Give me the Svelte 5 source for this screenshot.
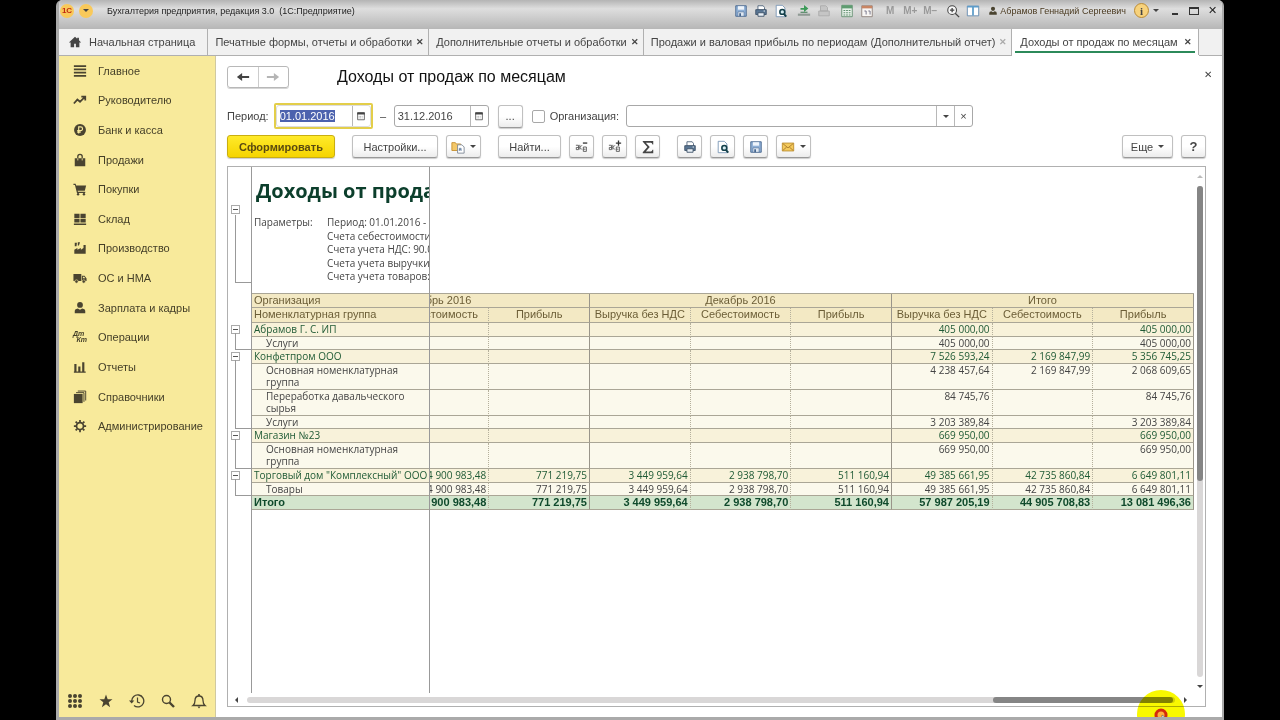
<script>
  // --- Tabs ---
  const tabs = [
    { label: 'Печатные формы, отчеты и обработки' },
    { label: 'Дополнительные отчеты и обработки' },
    { label: 'Продажи и валовая прибыль по периодам (Дополнительный отчет)', dim: true },
    { label: 'Доходы от продаж по месяцам', active: true },
  ];

  // --- Title bar tools ---
  const tools = [
    ['save', 'print', 'preview'],
    ['link', 'doc'],
    ['calc', 'calendar'],
    ['M', 'M+', 'M−'],
    ['zoom', 'panels'],
  ];

  // --- Sections ---
  const sections = [
    { icon: 'menu', label: 'Главное' },
    { icon: 'trend', label: 'Руководителю' },
    { icon: 'ruble', label: 'Банк и касса' },
    { icon: 'bag', label: 'Продажи' },
    { icon: 'cart', label: 'Покупки' },
    { icon: 'store', label: 'Склад' },
    { icon: 'factory', label: 'Производство' },
    { icon: 'truck', label: 'ОС и НМА' },
    { icon: 'person', label: 'Зарплата и кадры' },
    { icon: 'dtkt', label: 'Операции' },
    { icon: 'chart', label: 'Отчеты' },
    { icon: 'books', label: 'Справочники' },
    { icon: 'gear', label: 'Администрирование' },
  ];
  const shortcuts = ['grid', 'star', 'history', 'search', 'bell'];

  // --- Report ---
  const params = [
    'Период: 01.01.2016 -',
    'Счета себестоимости:',
    'Счета учета НДС: 90.03',
    'Счета учета выручки:',
    'Счета учета товаров:',
  ];
  const months = ['Ноябрь 2016', 'Декабрь 2016', 'Итого'];
  const measures = [
    '', 'Себестоимость', 'Прибыль',
    'Выручка без НДС', 'Себестоимость', 'Прибыль',
    'Выручка без НДС', 'Себестоимость', 'Прибыль',
  ];

  const empty = ['', '', '', '', '', ''];
  const trade = ['', '4 900 983,48', '771 219,75', '3 449 959,64', '2 938 798,70', '511 160,94', '49 385 661,95', '42 735 860,84', '6 649 801,11'];
  const groups = [
    {
      name: 'Абрамов Г. С. ИП',
      values: [...empty, '405 000,00', '', '405 000,00'],
      items: [{ name: 'Услуги', values: [...empty, '405 000,00', '', '405 000,00'] }],
    },
    {
      name: 'Конфетпром ООО',
      values: [...empty, '7 526 593,24', '2 169 847,99', '5 356 745,25'],
      items: [
        { name: 'Основная номенклатурная группа', tall: true, values: [...empty, '4 238 457,64', '2 169 847,99', '2 068 609,65'] },
        { name: 'Переработка давальческого сырья', tall: true, values: [...empty, '84 745,76', '', '84 745,76'] },
        { name: 'Услуги', values: [...empty, '3 203 389,84', '', '3 203 389,84'] },
      ],
    },
    {
      name: 'Магазин №23',
      values: [...empty, '669 950,00', '', '669 950,00'],
      items: [{ name: 'Основная номенклатурная группа', tall: true, values: [...empty, '669 950,00', '', '669 950,00'] }],
    },
    {
      name: 'Торговый дом "Комплексный" ООО',
      values: trade,
      items: [{ name: 'Товары', values: trade }],
    },
  ];
  const totals = ['', '4 900 983,48', '771 219,75', '3 449 959,64', '2 938 798,70', '511 160,94', '57 987 205,19', '44 905 708,83', '13 081 496,36'];

  let dateFrom = $state('01.01.2016');
  let dateTo = $state('31.12.2016');
  let organization = $state('');
  let byOrganization = $state(false);
</script>

{#snippet icon(name)}
  <svg class="icon" viewBox="0 0 16 16" aria-hidden="true">
    {#if name === 'home'}
      <path d="M8 2 1 8.500h2V14h4v-4h2v4h4V8.500h2L12.500 6V3h-2v1.300z" fill="#444" />
    {:else if name === 'save'}
      <path d="M2 2h12v12H2z" fill="#8fb0d6" stroke="#45648c" />
      <path d="M4.500 2.500h7v4h-7z" fill="#eef4fb" /><path d="M4.500 9h7v5h-7z" fill="#dfe8f2" stroke="#45648c" stroke-width=".6" />
      <path d="M6 10.500h2V14H6z" fill="#45648c" />
    {:else if name === 'print'}
      <path d="M4.500 2h6l1.500 2v3h-7.500z" fill="#fff" stroke="#4c6178" />
      <path d="M2 6.500h12V12H2z" fill="#5a7795" stroke="#3b5066" /><path d="M4.500 10h7v4h-7z" fill="#e9f0f7" stroke="#3b5066" />
      <path d="M11 8h1.500" stroke="#fff" />
    {:else if name === 'preview'}
      <path d="M2.500 1.500h7l3 3v10h-10z" fill="#fff" stroke="#7693b3" />
      <circle cx="9.500" cy="9" r="2.800" fill="#d6ecf2" stroke="#14404a" stroke-width="1.800" /><path d="m11.500 11.500 2.500 3" stroke="#14404a" stroke-width="2.200" />
    {:else if name === 'link'}
      <path d="M1 11h14v2.500H1z" fill="#8f9a94" /><path d="M4 9.500h8" stroke="#5f8d70" stroke-width="1.500" />
      <path d="M4 4.500h4V1l5 4-5 4V6.500H4z" fill="#3c9a58" />
    {:else if name === 'doc'}
      <path d="M4 2h6l2 2v4H4zM2 8h12v5.500H2z" fill="#c5c5c5" stroke="#aaa" />
    {:else if name === 'calc'}
      <path d="M2 1.500h12v13H2z" fill="#e8f2ea" stroke="#5e8c6c" /><path d="M2 1.500h12V5H2z" fill="#5e9c70" />
      <path d="M4 7.500h8M4 10h8M4 12.500h8" stroke="#5e8c6c" stroke-width="1.200" stroke-dasharray="2 1" />
    {:else if name === 'calendar'}
      <path d="M2 2h12v12.500H2z" fill="#f8f6f4" stroke="#8b7f7a" /><path d="M2 2h12v3H2z" fill="#c98563" />
      <path d="M5 8h2v4M9.500 8h2v4" fill="none" stroke="#6a6a80" />
    {:else if name === 'zoom'}
      <circle cx="7" cy="7" r="5" fill="#f8f8f8" stroke="#444" stroke-width="1.200" /><path d="M4.500 7h5M7 4.500v5M10.500 10.500 15 15" stroke="#444" stroke-width="1.500" />
    {:else if name === 'panels'}
      <path d="M1.500 2.500h13v11h-13z" fill="#fff" stroke="#5d86ad" /><path d="M1.500 3h13M8 3v10" stroke="#5d9cc9" stroke-width="2" />
    {:else if name === 'person'}
      <circle cx="8" cy="4.500" r="3.300" /><path d="M2 14v-3q0-2 3.500-2.500L8 10l2.500-1.500Q14 9 14 11v3z" />
    {:else if name === 'menu'}
      <path d="M1 1.500h14v2H1zM1 5.200h14v2H1zM1 8.900h14v2H1zM1 12.600h14v2H1z" />
    {:else if name === 'trend'}
      <path d="m1 12 4-4.500 3 2.500 5-5M9.500 4H14v4.500" fill="none" stroke="#4a4430" stroke-width="2" />
    {:else if name === 'ruble'}
      <circle cx="8" cy="8" r="6.800" /><path d="M6.500 12V4.500h2.300a2.100 2.100 0 0 1 0 4.200H4.800M4.800 10.500h4" fill="none" stroke="#f8ea9b" stroke-width="1.300" />
    {:else if name === 'bag'}
      <path d="M2 6h12v9H2z" /><path d="M5.500 8V4Q5.500 1.500 8 1.500T10.500 4v4" fill="none" stroke="#4a4430" stroke-width="1.500" />
      <path d="M5.500 6v2.500M10.500 6v2.500" stroke="#f8ea9b" />
    {:else if name === 'cart'}
      <path d="M.500 2H3l.6 2H15l-1.500 6H5.300l.4 1.200H14v1.300H4.500L2.200 3.300H.500z" /><circle cx="5.800" cy="14" r="1.400" /><circle cx="12.500" cy="14" r="1.400" />
    {:else if name === 'store'}
      <path d="M1.500 2h6v5h-6zM8.500 2h6v5h-6zM1.500 8h6v4h-6zM8.500 8h6v4h-6zM1 13h14v1.800H1z" />
    {:else if name === 'factory'}
      <path d="M1.500 14.500V10L5 8v2l4-2v2l3-2V4.500h2.500v10zM2 2h2.500L4 6H2zM5.500 1.500H8L6.800 5H5.500z" />
    {:else if name === 'truck'}
      <path d="M.500 3.500h9v8h-9zM10.200 5.500h3l2.300 3v3h-5.300z" /><circle cx="4" cy="12" r="1.900" stroke="#f8ea9b" stroke-width=".7" /><circle cx="12.300" cy="12" r="1.900" stroke="#f8ea9b" stroke-width=".7" />
      <path d="M11.300 6.500h1.500L14 8.200h-2.700z" fill="#f8ea9b" />
    {:else if name === 'chart'}
      <path d="M1.500 4.500H4V13H1.500zM6 7.500h2.500V13H6zM10.500 2.500H13V13h-2.500zM1 13h13.500v1.500H1z" />
    {:else if name === 'books'}
      <path d="M1 4.500h10V15H1z" /><path d="M3.500 3h9v10.500M5.500 1.200h9V12" fill="none" stroke="#4a4430" stroke-width="1.100" />
    {:else if name === 'gear'}
      <circle cx="8" cy="8" r="4" fill="none" stroke="#4a4430" stroke-width="2" />
      <path d="M8 1v2.500M8 12.500V15M1 8h2.500M12.500 8H15M3 3l1.800 1.800M11.200 11.200 13 13M13 3l-1.800 1.800M4.800 11.200 3 13" stroke="#4a4430" stroke-width="2" />
    {:else if name === 'grid'}
      {#each [3, 8, 13] as x}
        {#each [3, 8, 13] as y}
          <circle cx={x} cy={y} r="2" />
        {/each}
      {/each}
    {:else if name === 'star'}
      <path d="m8 1.500 1.700 4.700 4.800.1-3.800 3 1.400 4.900L8 11.300l-4.100 2.900 1.400-4.900-3.800-3 4.800-.1z" />
    {:else if name === 'history'}
      <path d="M2.800 8.500A6 6 0 1 1 5 12.600" fill="none" stroke="#4a4430" stroke-width="1.300" /><path d="M0 7.500h5.300L2.700 10.500z" /><path d="M8.500 4.500V9l2.500 1" fill="none" stroke="#4a4430" stroke-width="1.200" />
    {:else if name === 'search'}
      <circle cx="6.500" cy="6.500" r="4" fill="none" stroke="#4a4430" stroke-width="1.400" /><path d="m9.500 9.500 4.500 4.500" stroke="#4a4430" stroke-width="2.400" />
    {:else if name === 'bell'}
      <path d="M2 12.500q2-1.500 2-5 0-4.500 4-4.500t4 4.500q0 3.500 2 5z" fill="none" stroke="#4a4430" stroke-width="1.300" /><path d="M6.500 13.500h3L8 15.500zM7.200 1h1.600v2H7.200z" />
    {:else if name === 'back' || name === 'forward'}
      <path
        d="M1 8l6-4.500v3.300h8v2.400H7v3.300z"
        fill={name === 'back' ? '#444' : '#b5b5b5'}
        transform={name === 'back' ? undefined : 'rotate(180 8 8)'}
      />
    {:else if name === 'date'}
      <path d="M3.500 4h9v9h-9z" fill="#fff" stroke="#444" /><path d="M3 3h10v3H3z" fill="#444" /><path d="M5 8.500h6M5 10.500h6" stroke="#888" stroke-dasharray="1 1" />
    {:else if name === 'variants'}
      <path d="M1 3h4l1 1.500h5V12H1z" fill="#f4c869" stroke="#c58e2e" /><path d="M7.500 5.500h5l2.500 2.500v7H7.500z" fill="#fff" stroke="#7b8692" />
      <path d="M9.500 12.500v-3h2v3M9.500 11h2" fill="none" stroke="#45648c" stroke-width=".8" />
    {:else if name === 'collapse' || name === 'expand'}
      <path d="M1 6h3v5H1.500V8.500H4M5.500 5.500V11M5.500 8.500 8 6M5.500 8.500 8 11M13 8H9.500v5H13zM9.500 10.500H12" fill="none" stroke="#555" />
      <path d={name === 'expand' ? 'M9 3.500h6M12 .5v6' : 'M9 3.500h5'} stroke="#333" stroke-width="1.500" />
    {:else if name === 'sum'}
      <path d="M14 5V1H2v1l5.300 6L2 14v1h12v-4h-.9q-.3 2-1.800 2H5.500L10 8 5.500 3h5.800q1.500 0 1.800 2z" fill="#444" />
    {:else if name === 'mail'}
      <path d="M1.500 3.500h13v9h-13z" fill="#f4ca5c" stroke="#bd8d2c" /><path d="m2 4 6 5 6-5M2 12l4.500-4M14 12 9.500 8" fill="none" stroke="#a8792a" />
    {/if}
  </svg>
{/snippet}

<div class="desktop">
  <div class="window">
    <header class="titlebar">
      <span class="logo">1С</span>
      <button class="logo drop" aria-label="Главное меню"><i class="caret"></i></button>
      <span class="app-name">Бухгалтерия предприятия, редакция 3.0&nbsp; (1С:Предприятие)</span>
      <div class="tools">
        {#each tools as group}
          <div class="tool-group">
            {#each group as tool}
              <button class="tool" aria-label={tool}>
                {#if tool.startsWith('M')}{tool}{:else}{@render icon(tool)}{/if}
              </button>
            {/each}
          </div>
        {/each}
      </div>
      <span class="user">{@render icon('person')} Абрамов Геннадий Сергеевич</span>
      <button class="info" aria-label="О программе">i</button>
      <i class="caret"></i>
      <div class="win-buttons">
        <button aria-label="Свернуть"><i class="min"></i></button>
        <button aria-label="Развернуть"><i class="max"></i></button>
        <button aria-label="Закрыть">✕</button>
      </div>
    </header>

    <nav class="tabs">
      <a class="tab home" href="#home">{@render icon('home')}<span>Начальная страница</span></a>
      {#each tabs as tab}
        <div class="tab" class:active={tab.active}>
          <a href="#tab">{tab.label}</a>
          <button class="tab-close" class:dim={tab.dim} aria-label="Закрыть вкладку">✕</button>
        </div>
      {/each}
    </nav>

    <div class="body">
      <aside class="sidebar">
        <ul>
          {#each sections as s}
            <li>
              <a href="#section">
                {#if s.icon === 'dtkt'}
                  <span class="dtkt"><b>Дт</b><b>Кт</b></span>
                {:else}
                  {@render icon(s.icon)}
                {/if}
                <span>{s.label}</span>
              </a>
            </li>
          {/each}
        </ul>
        <div class="shortcuts">
          {#each shortcuts as s}
            <button aria-label={s}>{@render icon(s)}</button>
          {/each}
        </div>
      </aside>

      <main>
        <div class="head">
          <div class="history">
            <button aria-label="Назад">{@render icon('back')}</button>
            <button aria-label="Вперед">{@render icon('forward')}</button>
          </div>
          <h1>Доходы от продаж по месяцам</h1>
          <button class="close" aria-label="Закрыть">✕</button>
        </div>

        <div class="filters">
          <label for="from">Период:</label>
          <div class="focus-frame">
            <div class="field">
              <div class="value"><input id="from" class="selected" size="10" bind:value={dateFrom} /></div>
              <button aria-label="Выбрать дату">{@render icon('date')}</button>
            </div>
          </div>
          <span class="dash">–</span>
          <div class="field">
            <div class="value"><input aria-label="Конец периода" bind:value={dateTo} /></div>
            <button aria-label="Выбрать дату">{@render icon('date')}</button>
          </div>
          <button class="btn dots">...</button>
          <label class="check"><input type="checkbox" bind:checked={byOrganization} />Организация:</label>
          <div class="field org">
            <div class="value"><input aria-label="Организация" bind:value={organization} /></div>
            <button aria-label="Выбрать"><i class="caret"></i></button>
            <button aria-label="Очистить">×</button>
          </div>
        </div>

        <div class="actions">
          <button class="btn primary">Сформировать</button>
          <div class="set">
            <button class="btn wide">Настройки...</button>
            <button class="btn menu" aria-label="Варианты">{@render icon('variants')}<i class="caret"></i></button>
          </div>
          <div class="set">
            <button class="btn find">Найти...</button>
            <button class="btn sq" aria-label="Свернуть группы">{@render icon('collapse')}</button>
            <button class="btn sq" aria-label="Развернуть группы">{@render icon('expand')}</button>
            <button class="btn sq" aria-label="Сумма">{@render icon('sum')}</button>
          </div>
          <div class="set">
            <button class="btn sq" aria-label="Печать">{@render icon('print')}</button>
            <button class="btn sq" aria-label="Просмотр">{@render icon('preview')}</button>
            <button class="btn sq" aria-label="Сохранить">{@render icon('save')}</button>
            <button class="btn menu" aria-label="Отправить">{@render icon('mail')}<i class="caret"></i></button>
          </div>
          <div class="set last">
            <button class="btn more">Еще <i class="caret"></i></button>
            <button class="btn sq help">?</button>
          </div>
        </div>

        <div class="sheet">
          <div class="panes">
            <!-- Frozen columns -->
            <div class="frozen">
              <div class="intro">
                <div class="outline"><button class="toggle" aria-label="Свернуть"></button></div>
                <div class="intro-text">
                  <h2>Доходы от продаж</h2>
                  <div class="params">
                    <span>Параметры:</span>
                    <ul>
                      {#each params as p}<li>{p}</li>{/each}
                    </ul>
                  </div>
                </div>
              </div>
              <table class="names">
                <colgroup><col class="c-outline" /><col /></colgroup>
                <thead>
                  <tr><td class="blank" rowspan="2"></td><th>Организация</th></tr>
                  <tr><th>Номенклатурная группа</th></tr>
                </thead>
                {#each groups as g}
                  <tbody>
                    <tr class="group">
                      <td class="outline" rowspan={g.items.length + 1}><button class="toggle" aria-label="Свернуть"></button></td>
                      <td>{g.name}</td>
                    </tr>
                    {#each g.items as item}
                      <tr class:tall={item.tall}><td class="item">{item.name}</td></tr>
                    {/each}
                  </tbody>
                {/each}
                <tfoot>
                  <tr><td class="blank"></td><td>Итого</td></tr>
                </tfoot>
              </table>
            </div>

            <!-- Scrolled to the last column -->
            <div class="scrolled">
              <table class="numbers">
                <thead>
                  <tr>{#each months as m}<th colspan="3">{m}</th>{/each}</tr>
                  <tr>{#each measures as m}<th>{m}</th>{/each}</tr>
                </thead>
                <tbody>
                  {#each groups as g}
                    <tr class="group">{#each g.values as v}<td>{v}</td>{/each}</tr>
                    {#each g.items as item}
                      <tr class:tall={item.tall}>{#each item.values as v}<td>{v}</td>{/each}</tr>
                    {/each}
                  {/each}
                </tbody>
                <tfoot>
                  <tr>{#each totals as v}<td>{v}</td>{/each}</tr>
                </tfoot>
              </table>
            </div>

            <div class="vscroll">
              <i class="arrow up"></i>
              <div class="track"><div class="thumb"></div></div>
              <i class="arrow down"></i>
            </div>
          </div>
          <div class="hscroll">
            <i class="arrow left"></i>
            <div class="track"><div class="thumb"></div></div>
            <i class="arrow right"></i>
          </div>
        </div>
      </main>
    </div>

    <!-- Click highlight with the pointer -->
    <div class="click">
      <svg viewBox="0 0 48 48" aria-hidden="true">
        <circle cx="24" cy="25" r="5" fill="#ffb03c" stroke="#d42a0c" stroke-width="3" />
        <path d="M25 25v9l2-2 2 4h3l-2-5h3z" fill="#fff" stroke="#555" stroke-width=".6" />
      </svg>
    </div>
  </div>
</div>

<style>
  :global(body) {
    background: #000;
  }

  .desktop {
    box-sizing: border-box;
    height: 100vh;
    padding: 0 56px;
    font-family: 'Liberation Sans', Arial, sans-serif;
    font-size: 11px;
    color: #444;
  }
  .desktop :global(*) { box-sizing: border-box; }

  .window {
    position: relative;
    display: flex;
    flex-direction: column;
    height: 100%;
    overflow: hidden;
    background: #fff;
    border: solid #aaa;
    border-width: 0 2px 3px 3px;
    border-radius: 6px 6px 0 0;
  }

  button {
    display: inline-flex;
    align-items: center;
    justify-content: center;
    padding: 0;
    border: 0;
    background: none;
    color: inherit;
    font: inherit;
    cursor: pointer;
  }
  input {
    min-width: 0;
    padding: 0;
    border: 0;
    outline: 0;
    background: none;
    color: inherit;
    font: inherit;
  }
  a { color: inherit; text-decoration: none; }
  ul { margin: 0; padding: 0; list-style: none; }
  .icon { width: 14px; height: 14px; fill: #4a4430; flex: none; }
  .caret {
    border: 3px solid transparent;
    border-top-color: #444;
    border-bottom: 0;
  }

  /* ---- Title bar ---- */
  .titlebar {
    display: flex;
    flex: none;
    align-items: center;
    height: 29px;
    padding: 0 0 8px 1px;
    background: linear-gradient(#b4b4b4, #dedede 30%, #cdcdcd 60%, #b6b6b6);
  }
  .logo {
    width: 14px;
    height: 14px;
    border-radius: 50%;
    background: #f9c95a;
    color: #c02a10;
    font-size: 8px;
    font-weight: bold;
    line-height: 14px;
    text-align: center;
  }
  .drop { margin-left: 5px; }
  .app-name {
    flex: 1;
    margin-left: 14px;
    font-size: 9px;
    color: #222;
    white-space: nowrap;
  }
  .tools { display: flex; gap: 3px; }
  .tool-group { display: flex; }
  .tool { width: 20px; color: #999; font-size: 10px; font-weight: bold; }
  .user {
    display: flex;
    align-items: center;
    gap: 2px;
    margin: 0 8px 0 5px;
    font-size: 9px;
    color: #4a3a20;
    white-space: nowrap;
  }
  .user .icon { width: 10px; height: 10px; }
  .info {
    width: 15px;
    height: 15px;
    margin-right: 4px;
    border: 1px solid #b98a35;
    border-radius: 50%;
    background: #f7d27c;
    font-family: 'Liberation Serif', serif;
    font-weight: bold;
  }
  .win-buttons { display: flex; margin-left: 6px; }
  .win-buttons button { width: 19px; height: 16px; font-size: 11px; color: #222; }
  .min { width: 6px; height: 2px; margin-top: 6px; background: #333; }
  .max { width: 10px; height: 8px; border: 1px solid #333; border-top-width: 2px; }

  /* ---- Tabs ---- */
  .tabs {
    display: flex;
    flex: none;
    height: 27px;
    background: #f1f1f1;
    border-bottom: 1px solid #b0b0b0;
  }
  .tab {
    display: flex;
    align-items: center;
    gap: 4px;
    padding: 0 4px 0 7px;
    border-right: 1px solid #b0b0b0;
    white-space: nowrap;
  }
  .home { gap: 7px; padding: 0 12px 0 9px; }
  .tab-close { width: 8px; font-size: 9px; font-weight: bold; }
  .dim { color: #aaa; }
  .active {
    gap: 6px;
    padding: 0 6px 0 8px;
    background: #fff linear-gradient(#2c8a5a, #2c8a5a) 50% 22px / calc(100% - 6px) 2px no-repeat;
    box-shadow: 0 1px 0 #fff;
  }

  /* ---- Sidebar ---- */
  .body { display: flex; flex: 1; min-height: 0; }
  .sidebar {
    display: flex;
    flex: none;
    flex-direction: column;
    justify-content: space-between;
    width: 157px;
    background: #f8ea9b;
    border-right: 1px solid #d0c9a0;
    color: #443f28;
  }
  .sidebar ul { display: grid; grid-auto-rows: 1fr; height: 385px; }
  .sidebar a {
    display: flex;
    align-items: center;
    gap: 11px;
    height: 100%;
    padding-left: 14px;
  }
  .dtkt { display: flex; flex-direction: column; width: 14px; font-size: 7px; line-height: 6px; font-style: italic; }
  .dtkt b:last-child { align-self: flex-end; }
  .shortcuts { display: flex; padding-bottom: 7px; }
  .shortcuts button { width: 31px; height: 18px; }
  .shortcuts .icon { width: 16px; height: 16px; }

  /* ---- Form head ---- */
  main {
    display: flex;
    flex: 1;
    flex-direction: column;
    min-width: 0;
    padding: 10px 16px 10px 11px;
  }
  .head { display: flex; align-items: center; height: 22px; }
  .history {
    display: flex;
    width: 62px;
    height: 22px;
    border: 1px solid #b8b8b8;
    border-radius: 3px;
    box-shadow: 0 1px 0 #d5d5d5;
  }
  .history button { flex: 1; }
  .history button + button { border-left: 1px solid #ccc; }
  h1 {
    flex: 1;
    margin: 0 0 0 48px;
    font-size: 16px;
    font-weight: normal;
    line-height: 24px;
    color: #111;
  }
  .close { width: 10px; height: 12px; margin: -6px -7px 0 0; font-size: 10px; }

  /* ---- Filters ---- */
  .filters { display: flex; align-items: center; height: 26px; margin-top: 15px; }
  .field {
    display: flex;
    width: 95px;
    height: 22px;
    border: 1px solid #a8a8a8;
    border-radius: 3px;
    background: #fff;
  }
  .value { display: flex; flex: 1; align-items: center; min-width: 0; padding: 0 3px; }
  .value input { width: 100%; }
  .value .selected { width: 55px; background: #4c62ae; color: #fff; }
  .field button { width: 18px; border-left: 1px solid #b8b8b8; }
  .field .icon { width: 12px; height: 12px; }
  .focus-frame { margin-left: 5px; border: 2px solid #e3ce4a; border-radius: 2px; }
  .focus-frame .field { border-color: #ddd; }
  .dash { width: 21px; text-align: center; }
  .dots { width: 25px; margin-left: 9px; }
  .check { display: flex; align-items: center; gap: 5px; margin-left: 9px; }
  .check input {
    appearance: none;
    width: 13px;
    height: 13px;
    margin: 0;
    border: 1px solid #a8a8a8;
    border-radius: 2px;
  }
  .check input:checked { background: #4c62ae; }
  .org { flex: 0 1 347px; margin-left: 7px; }

  /* ---- Actions ---- */
  .actions { display: flex; gap: 17px; margin-top: 6px; }
  .set { display: flex; gap: 8px; }
  .last { margin-left: auto; }
  .btn {
    height: 23px;
    border: 1px solid #c0c0c0;
    border-bottom-color: #999;
    border-radius: 3px;
    background: linear-gradient(#fff 50%, #ececec);
    box-shadow: 0 1px 1px #ccc;
  }
  .btn .icon { fill: #444; }
  .primary {
    width: 108px;
    border-color: #c9ae10;
    background: linear-gradient(#ffea2a, #f5d400);
    color: #5a4a10;
    font-weight: bold;
  }
  .wide { width: 86px; }
  .find { width: 63px; }
  .menu { width: 35px; gap: 5px; }
  .sq { width: 25px; }
  .more { width: 51px; gap: 5px; }
  .help { font-size: 13px; font-weight: bold; }

  /* ---- Sheet ---- */
  .sheet {
    display: flex;
    flex: 1;
    flex-direction: column;
    min-height: 0;
    margin-top: 8px;
    border: 1px solid #b0b0b0;
  }
  .panes { display: flex; flex: 1; min-height: 0; }
  .frozen {
    flex: none;
    width: 202px;
    overflow: hidden;
    border-right: 1px solid #999;
    background: linear-gradient(#999, #999) 23px 0 / 1px 100% no-repeat;
  }
  .scrolled {
    display: flex;
    flex: 1;
    justify-content: flex-end;
    min-width: 0;
    padding-top: 127px;
    overflow: hidden;
  }
  .intro { display: flex; height: 127px; }
  .intro-text { flex: 1; min-width: 0; padding: 12px 0 0 2px; overflow: hidden; white-space: nowrap; }
  .intro .outline { flex: none; width: 24px; height: 116px; padding-top: 38px; }
  .intro .outline::before { top: 48px; }
  h2 {
    margin: 0 0 0 2px;
    font-family: 'Open Sans', sans-serif;
    font-size: 20px;
    line-height: 24px;
    color: #0c3f2c;
  }
  .params {
    display: flex;
    margin-top: 13px;
    font-family: 'Open Sans', sans-serif;
    font-size: 10px;
    line-height: 13px;
  }
  .params span { width: 73px; flex: none; }
  .params ul { display: grid; grid-auto-rows: 1fr; height: 68px; }

  /* Collapse boxes with their brackets */
  .outline { position: relative; }
  .outline::before {
    content: '';
    position: absolute;
    top: 10px;
    right: 0;
    bottom: 0;
    left: 7px;
    border: solid #999;
    border-width: 0 0 1px 1px;
  }
  .toggle {
    display: block;
    width: 9px;
    height: 9px;
    margin-left: 3px;
    border: 1px solid #aaa;
    background: #fff linear-gradient(#555, #555) 50% 50% / 5px 1px no-repeat;
  }

  table { table-layout: fixed; border-collapse: separate; border-spacing: 0; }
  .names { width: 201px; }
  .c-outline { width: 24px; }
  .numbers { flex: none; width: 906px; height: 0; }
  tr { height: 13px; }
  .group, tfoot tr, thead tr { height: 14px; }
  thead tr + tr { height: 15px; }
  .tall { height: 26px; }
  th, td {
    padding: 0 2px;
    border-bottom: 1px solid #aaa696;
    background: #fbf9ec;
    font-family: 'Open Sans', sans-serif;
    font-size: 10px;
    line-height: 12px;
    vertical-align: top;
  }
  th, tfoot td { font-family: inherit; font-size: 11px; line-height: 13px; }
  th {
    background: #f3e9c4;
    color: #6b5d36;
    font-weight: normal;
    text-align: left;
    white-space: nowrap;
  }
  thead tr:first-child th { box-shadow: 0 -1px 0 #aaa696; }
  .group td { background: #f8f2da; color: #1f5a35; line-height: 13px; }
  tfoot td { background: #d3e5cd; color: #0f4a2c; font-weight: bold; }
  .names .group td { white-space: nowrap; }
  .names .item { padding: 0 20px 0 14px; }
  .names .outline, .names .blank { padding: 2px 0 0; border: 0; background: none; }
  .numbers td { text-align: right; border-right: 1px dotted #b5b09c; white-space: nowrap; }
  .numbers th { border-right: 1px dotted #b5b09c; text-align: center; }
  .numbers td:nth-child(3n), .numbers tr + tr th:nth-child(3n), .numbers th[colspan] { border-right: 1px solid #99958a; }

  /* ---- Scrollbars ---- */
  .vscroll {
    display: flex;
    flex: none;
    flex-direction: column;
    align-items: center;
    justify-content: space-between;
    width: 11px;
    padding: 8px 0 5px;
  }
  .hscroll {
    display: flex;
    flex: none;
    align-items: center;
    gap: 9px;
    height: 13px;
    padding: 0 18px 0 7px;
  }
  .track { flex: 1; border-radius: 3px; background: #d9d7d7; }
  .vscroll .track { width: 6px; margin: 8px 0; }
  .hscroll .track { display: flex; justify-content: flex-end; height: 6px; padding-right: 2px; }
  .thumb { border-radius: 3px; background: #858585; }
  .vscroll .thumb { height: 60%; }
  .hscroll .thumb { width: 180px; height: 6px; }
  .arrow { border: 3px solid transparent; }
  .up { border-bottom-color: #bbb; border-top: 0; }
  .down { border-top-color: #444; border-bottom: 0; }
  .left { border-right-color: #444; border-left: 0; }
  .right { border-left-color: #444; border-right: 0; }

  /* ---- Click highlight ---- */
  .click {
    position: absolute;
    right: 37px;
    bottom: -21px;
    width: 48px;
    height: 48px;
    pointer-events: none;
  }
  .click::before {
    content: '';
    position: absolute;
    inset: 0;
    border-radius: 50%;
    background: #f8f800;
    mix-blend-mode: multiply;
  }
  .click svg { position: relative; }
</style>
